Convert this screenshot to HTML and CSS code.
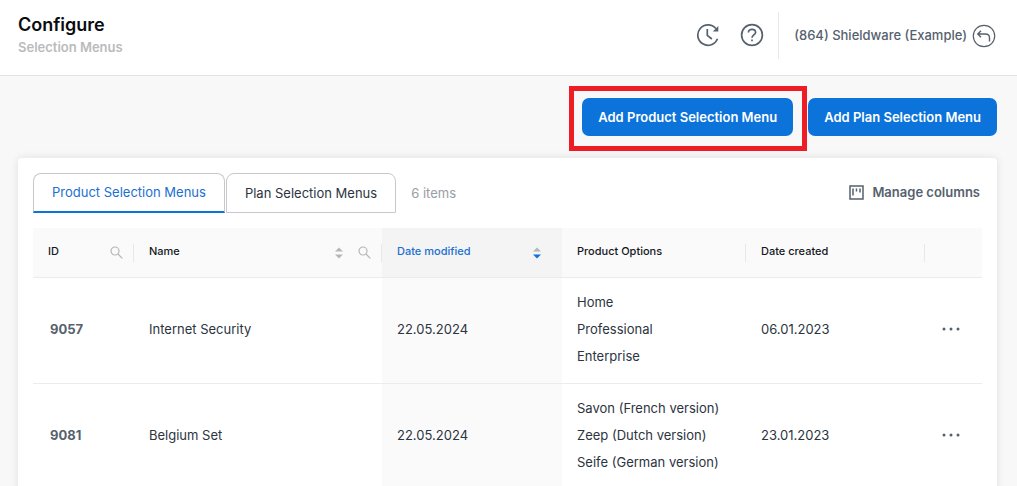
FILE: index.html
```html
<!DOCTYPE html>
<html lang="en">
<head>
<meta charset="utf-8">
<meta name="viewport" content="width=device-width, initial-scale=1">
<title>Configure - Selection Menus</title>
<link rel="stylesheet" href="styles.css">
</head>
<body>
<header class="topbar">
  <div class="heading">
    <h1 class="title">Configure</h1>
    <p class="subtitle">Selection Menus</p>
  </div>
  <div class="tools">
    <button class="icon-button" type="button" aria-label="History">
      <svg width="24" height="24" viewBox="0 0 24 24" fill="none" stroke="currentColor" stroke-width="1.7"><path d="M21.500 15.800A10.200 10.200 0 1 1 19.800 5.500"/><path d="M11.300 6v6.400l4.600 3.600"/><path d="M22.300 3v5.500h-5.500z" fill="currentColor" stroke="none"/></svg>
    </button>
    <button class="icon-button" type="button" aria-label="Help">
      <svg width="24" height="24" viewBox="0 0 24 24" fill="none" stroke="currentColor" stroke-width="1.7"><circle cx="12" cy="12" r="10.4"/><path d="M8.4 9.4C8.4 7.4 10 6.3 12 6.3s3.6 1.2 3.6 3c0 2.500-3.600 2.700-3.600 5.400"/><path d="M12 16.400v1.900"/></svg>
    </button>
  </div>
  <div class="account">
    <span>(864) Shieldware (Example)</span>
    <button class="icon-button" type="button" aria-label="Switch back">
      <svg width="24" height="24" viewBox="0 0 24 24" fill="none" stroke="currentColor" stroke-width="1.2"><circle cx="12" cy="12" r="10.700"/><path d="M9 6.800 5.800 10 9 13.200M6 10h7.500c2.800 0 4 1.700 4 4v3.500" stroke-width="1.400"/></svg>
    </button>
  </div>
</header>
<main class="content">
  <div class="actions">
    <div class="highlight"><button class="primary" type="button">Add Product Selection Menu</button></div>
    <button class="primary" type="button">Add Plan Selection Menu</button>
  </div>
  <section class="card">
    <div class="toolbar">
      <div class="tabs" role="tablist">
        <button class="tab active" type="button" role="tab" aria-selected="true">Product Selection Menus</button>
        <button class="tab" type="button" role="tab" aria-selected="false">Plan Selection Menus</button>
      </div>
      <span class="count">6 items</span>
      <button class="manage" type="button">
        <svg width="15" height="15" viewBox="0 0 15 15" fill="none" stroke="currentColor" stroke-width="1.500"><path d="M1 1h13v13H1zM4 3.500v7M7.500 3.500v3M11 3.500v4"/></svg>
        Manage columns
      </button>
    </div>
    <table class="grid">
      <colgroup><col class="c-id"><col><col class="c-modified"><col class="c-options"><col class="c-created"><col class="c-more"></colgroup>
      <thead>
        <tr>
          <th scope="col"><div class="head split"><span>ID</span><button class="small-button" type="button" aria-label="Search ID"><svg width="13" height="13" viewBox="0 0 13 13" fill="none" stroke="currentColor" stroke-width="1.200"><circle cx="5" cy="5" r="4"/><path d="m8 8 4.300 4.300"/></svg></button></div></th>
          <th scope="col"><div class="head split"><span>Name</span><button class="small-button" type="button" aria-label="Sort by name"><svg width="8" height="12" viewBox="0 0 8 12" fill="currentColor"><path d="M0 4.600 4 .4l4 4.200zM0 7.400h8l-4 4.200z"/></svg></button><button class="small-button" type="button" aria-label="Search name"><svg width="13" height="13" viewBox="0 0 13 13" fill="none" stroke="currentColor" stroke-width="1.200"><circle cx="5" cy="5" r="4"/><path d="m8 8 4.300 4.300"/></svg></button></div></th>
          <th scope="col" class="sorted" aria-sort="descending"><div class="head"><span>Date modified</span><button class="small-button sort-end" type="button" aria-label="Sort by date modified"><svg width="8" height="12" viewBox="0 0 8 12" fill="currentColor"><path d="M0 4.600 4 .4l4 4.200z"/><path class="on" d="M0 7.400h8l-4 4.200z"/></svg></button></div></th>
          <th scope="col"><div class="head split"><span>Product Options</span></div></th>
          <th scope="col"><div class="head split"><span>Date created</span></div></th>
          <th><div class="head"></div></th>
        </tr>
      </thead>
      <tbody>
        <tr>
          <td class="id">9057</td>
          <td>Internet Security</td>
          <td class="sorted">22.05.2024</td>
          <td>Home<br>Professional<br>Enterprise</td>
          <td>06.01.2023</td>
          <td><button class="more" type="button" aria-label="More actions for 9057"><svg width="18" height="4" viewBox="0 0 18 4" fill="currentColor"><circle cx="2" cy="2" r="1.500"/><circle cx="9" cy="2" r="1.500"/><circle cx="16" cy="2" r="1.500"/></svg></button></td>
        </tr>
        <tr>
          <td class="id">9081</td>
          <td>Belgium Set</td>
          <td class="sorted">22.05.2024</td>
          <td>Savon (French version)<br>Zeep (Dutch version)<br>Seife (German version)</td>
          <td>23.01.2023</td>
          <td><button class="more" type="button" aria-label="More actions for 9081"><svg width="18" height="4" viewBox="0 0 18 4" fill="currentColor"><circle cx="2" cy="2" r="1.500"/><circle cx="9" cy="2" r="1.500"/><circle cx="16" cy="2" r="1.500"/></svg></button></td>
        </tr>
      </tbody>
    </table>
  </section>
</main>
</body>
</html>
```

FILE: styles.css
```css
* { box-sizing: border-box; }

body {
  margin: 0;
  height: 100vh;
  overflow: hidden;
  background: #f8f8f8;
  color: #2c3440;
  font: 13px/27px Inter, "Open Sans", sans-serif;
}

button {
  padding: 0;
  border: 0;
  background: none;
  color: inherit;
  font: inherit;
  cursor: pointer;
}

svg { display: block; }

.topbar {
  display: flex;
  align-items: flex-start;
  padding: 12px 21px 16px 18px;
  border-bottom: 1px solid #e2e2e2;
  background: #fff;
}

.heading { flex: 1; }

.title {
  margin: 0;
  color: #0a0c0f;
  font-size: 18px;
  font-weight: 600;
  line-height: 26px;
}

.subtitle {
  margin: 0;
  color: #b9bbbd;
  font-weight: 600;
  line-height: 18px;
}

.tools {
  display: flex;
  align-items: center;
  gap: 20px;
  height: 47px;
  padding: 0 14px 2px 0;
  border-right: 1px solid #e8e8e8;
  color: #56616e;
}

.account {
  display: flex;
  align-items: center;
  gap: 5px;
  height: 47px;
  padding-left: 15px;
  color: #56616e;
  font-weight: 500;
}

.content { padding: 22px 20px 24px 18px; }

.actions {
  display: flex;
  justify-content: flex-end;
  gap: 15px;
}

.highlight { position: relative; }

.highlight::after {
  content: "";
  position: absolute;
  inset: -12px -14px -15px -13px;
  border: 5px solid #ee1c25;
  pointer-events: none;
}

.primary {
  height: 38px;
  padding: 0 16px;
  border-radius: 7px;
  background: #0b73da;
  color: #fff;
  font-weight: 600;
}

.card {
  margin-top: 22px;
  padding: 15px;
  border-radius: 4px;
  background: #fff;
  box-shadow: 0 0 8px rgba(0, 0, 0, 0.1);
}

.toolbar {
  display: flex;
  align-items: center;
  margin-bottom: 15px;
}

.tabs {
  display: flex;
  gap: 1px;
}

.tab {
  height: 40px;
  padding: 0 18px;
  border: 1px solid #c6c8cb;
  border-radius: 8px 8px 0 0;
}

.tab.active {
  border-bottom: 2px solid #0b73da;
  color: #1a6fd0;
}

.count {
  margin-left: 15px;
  color: #989da3;
}

.manage {
  display: flex;
  align-items: center;
  gap: 8px;
  margin-left: auto;
  padding: 0 2px 2px 0;
  color: #56616e;
  font-weight: 600;
}

.grid {
  width: 100%;
  border-collapse: separate;
  border-spacing: 0;
  table-layout: fixed;
}

.c-id { width: 101px; }
.c-modified { width: 180px; }
.c-options { width: 184px; }
.c-created { width: 179px; }
.c-more { width: 57px; }

.grid th {
  height: 50px;
  padding: 0;
  border-bottom: 1px solid #ececec;
  background: #fafafa;
  color: #14181d;
  font-size: 11px;
  font-weight: 500;
  text-align: left;
}

.grid th.sorted {
  background: #f4f4f4;
  color: #1a6fd0;
}

.head {
  display: flex;
  align-items: center;
  height: 18px;
  padding: 0 10px 0 15px;
}

.head.split { border-right: 1px solid #e8e8e8; }

.head span {
  flex: 1;
  padding-bottom: 2px;
}

.small-button {
  margin-left: 15px;
  color: #b4b6b9;
}

.sort-end { margin-right: 11px; }
.on { fill: #0b73da; }

.grid td {
  padding: 11px 15px 13px;
  border-bottom: 1px solid #ececec;
}

.grid td.sorted { background: #fafafa; }

.grid td.id {
  padding-left: 17px;
  color: #56616e;
  font-weight: 700;
}

.more {
  display: block;
  padding: 6px 2px 8px;
  color: #56616e;
}
```
